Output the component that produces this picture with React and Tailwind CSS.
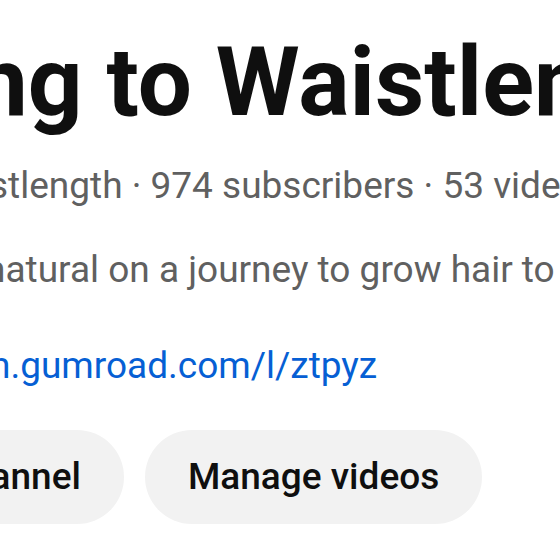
export default function App() {
  return (
    <div className="w-[560px] h-[560px] overflow-hidden bg-white font-['Roboto',sans-serif] whitespace-nowrap">
      <div className="flex flex-col pt-[34px]">
        <h1 className="ml-[-26px] text-[96px] leading-[96px] font-bold text-[#0f0f0f]">
          ng to Waistlength
        </h1>
        <div className="mt-[30px] ml-[-11px] text-[37px] leading-[52px] text-[#606060]">
          stlength · 974 subscribers · 53 videos
        </div>
        <div className="mt-[32px] ml-[-15px] text-[37px] leading-[52px] text-[#606060]">
          natural on a journey to grow hair to waistlength
        </div>
        <div className="mt-[44px] ml-[-10px] text-[37px] leading-[52px] text-[#065fd4]">
          n.gumroad.com/l/ztpyz
        </div>
        <div className="mt-[38px] flex gap-[21px]">
          <button className="ml-[-278px] shrink-0 h-[94px] px-[43px] rounded-full bg-[#f2f2f2] text-[37px] font-medium text-[#0f0f0f]">
            Customize channel
          </button>
          <button className="shrink-0 h-[94px] px-[43px] rounded-full bg-[#f2f2f2] text-[37px] font-medium text-[#0f0f0f]">
            Manage videos
          </button>
        </div>
      </div>
    </div>
  );
}
